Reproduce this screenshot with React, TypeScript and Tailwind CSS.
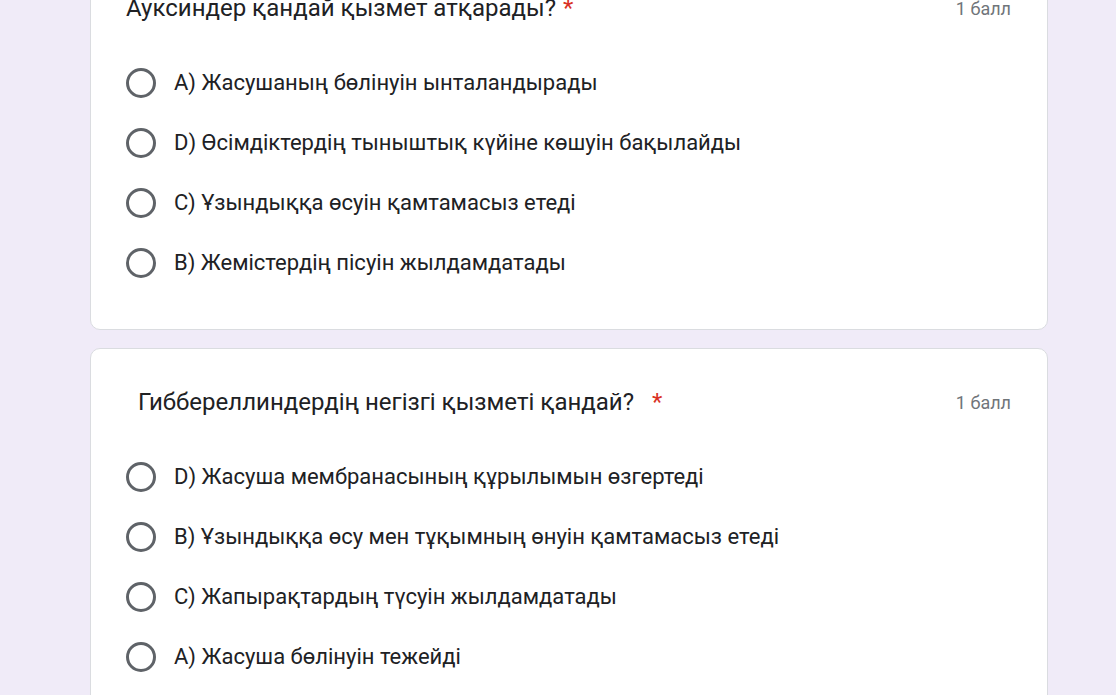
import React from 'react';

interface Question {
  title: string;
  gap: string;
  indent: string;
  options: string[];
}

const questions: Question[] = [
  {
    title: 'Ауксиндер қандай қызмет атқарады?',
    gap: 'ml-[7px]',
    indent: 'pl-0',
    options: [
      'А) Жасушаның бөлінуін ынталандырады',
      'D) Өсімдіктердің тыныштық күйіне көшуін бақылайды',
      'С) Ұзындыққа өсуін қамтамасыз етеді',
      'В) Жемістердің пісуін жылдамдатады',
    ],
  },
  {
    title: 'Гиббереллиндердің негізгі қызметі қандай?',
    gap: 'ml-[18px]',
    indent: 'pl-[12px]',
    options: [
      'D) Жасуша мембранасының құрылымын өзгертеді',
      'В) Ұзындыққа өсу мен тұқымның өнуін қамтамасыз етеді',
      'С) Жапырақтардың түсуін жылдамдатады',
      'А) Жасуша бөлінуін тежейді',
    ],
  },
];

function Radio() {
  return <div className="w-[30px] h-[30px] rounded-full border-[3px] border-[#5f6368] shrink-0" />;
}

export default function App() {
  return (
    <div className="h-[695px] overflow-hidden bg-[#f0ebf8] font-['Roboto',sans-serif]">
      <div className="flex flex-col gap-[18px] ml-[90px] w-[958px] -mt-[46px]">
        {questions.map((q, i) => (
          <div
            key={i}
            className="bg-white border border-[#dadce0] rounded-[10px] pt-[38px] pb-[36px] pl-[35px] pr-[36px]"
          >
            <div className="flex items-center justify-between h-[30px]">
              <div className={`text-[24px] text-[#202124] leading-[30px] ${q.indent}`}>
                {q.title}
                <span className={`text-[#d93025] ${q.gap}`}>*</span>
              </div>
              <div className="text-[18px] text-[#70757a]">1 балл</div>
            </div>
            <div className="flex flex-col mt-[30px]">
              {q.options.map((o) => (
                <div key={o} className="flex items-center h-[60px] gap-[18px]">
                  <Radio />
                  <span className="text-[22px] text-[#202124] leading-[30px]">{o}</span>
                </div>
              ))}
            </div>
          </div>
        ))}
      </div>
    </div>
  );
}
